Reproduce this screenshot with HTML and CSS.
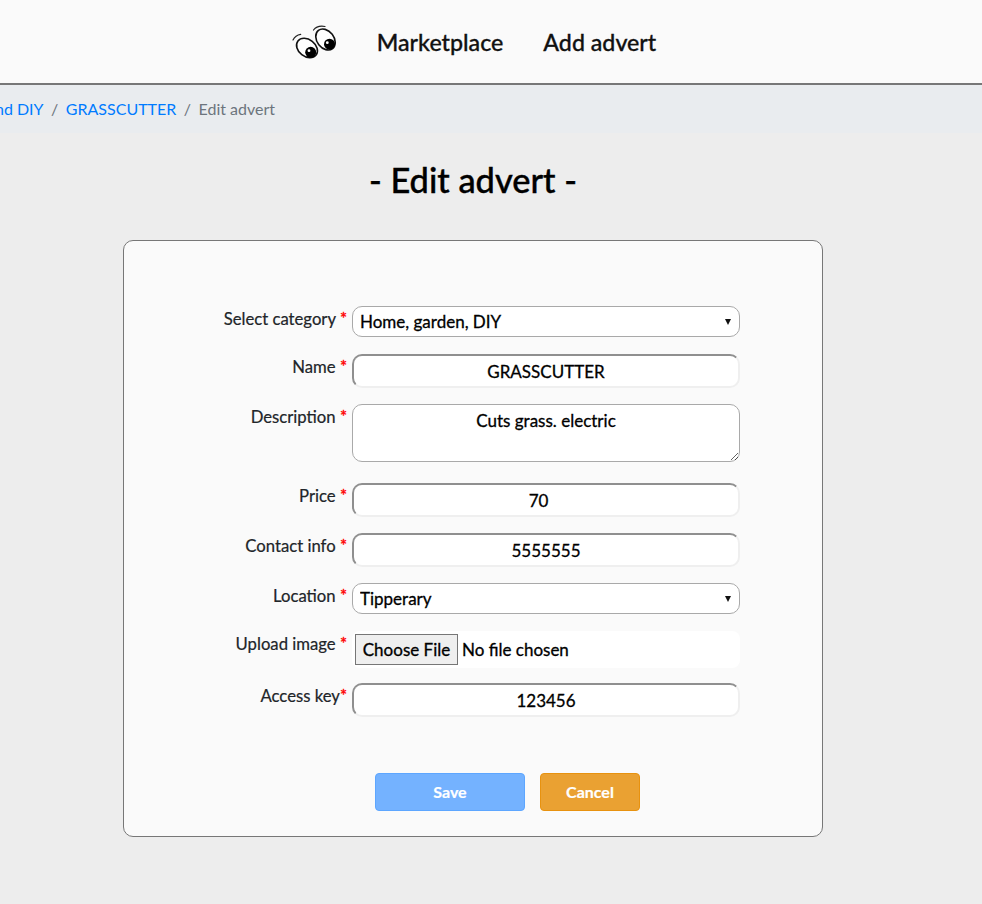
FILE: index.html
```html
<!DOCTYPE html>
<html lang="en">
<head>
<meta charset="utf-8">
<title>Edit advert</title>
<link rel="stylesheet" href="styles.css">
</head>
<body>
<header class="nav">
  <svg class="logo" width="45" height="36" viewBox="0 0 45 36" aria-label="Eyes logo">
    <g transform="translate(-292 -24)">
      <ellipse class="eye" cx="307" cy="48" rx="11.500" ry="8.500" transform="rotate(38 307 48)"/>
      <ellipse class="eye" cx="325.500" cy="39.500" rx="11.500" ry="8.500" transform="rotate(52 325.500 39.500)"/>
      <circle cx="310.700" cy="52.300" r="5.500"/>
      <circle cx="329.500" cy="44.200" r="5.500"/>
      <circle class="glint" cx="309" cy="50.700" r="1.400"/>
      <circle class="glint" cx="327.300" cy="42.700" r="1.400"/>
      <path class="brow" d="M293 40C294.500 36.800 297 34.800 300.700 34.300"/>
      <path class="brow" d="M313.500 30C316 26.800 319.500 25.500 325 26.500"/>
    </g>
  </svg>
  <a class="nav-link" href="#">Marketplace</a>
  <a class="nav-link" href="#">Add advert</a>
</header>
<nav class="crumbs">
  <a href="#">and DIY</a><span class="sep">/</span><a href="#">GRASSCUTTER</a><span class="sep">/</span><span class="current">Edit advert</span>
</nav>
<main class="content">
  <h1 class="title">- Edit advert -</h1>
  <form class="card">
    <div class="row">
      <label class="label">Select category <span class="req">*</span></label>
      <select class="field select"><option>Home, garden, DIY</option></select>
    </div>
    <div class="row">
      <label class="label">Name <span class="req">*</span></label>
      <input class="field input" type="text" value="GRASSCUTTER">
    </div>
    <div class="row row-area">
      <label class="label">Description <span class="req">*</span></label>
      <textarea class="field area">Cuts grass. electric</textarea>
    </div>
    <div class="row">
      <label class="label">Price <span class="req">*</span></label>
      <input class="field input short" type="text" value="70">
    </div>
    <div class="row">
      <label class="label">Contact info <span class="req">*</span></label>
      <input class="field input" type="text" value="5555555">
    </div>
    <div class="row">
      <label class="label">Location <span class="req">*</span></label>
      <select class="field select"><option>Tipperary</option></select>
    </div>
    <div class="row">
      <label class="label">Upload image <span class="req">*</span></label>
      <input class="field file" type="file">
    </div>
    <div class="row">
      <label class="label">Access key<span class="req">*</span></label>
      <input class="field input" type="text" value="123456">
    </div>
    <div class="actions">
      <button class="btn save" type="button">Save</button>
      <button class="btn cancel" type="button">Cancel</button>
    </div>
  </form>
</main>
</body>
</html>
```
FILE: styles.css
```css
* { box-sizing: border-box; }
html, body { margin: 0; height: 100%; }
body {
  background: #ededed;
  color: #212529;
  font-family: Lato, "Liberation Sans", sans-serif;
  font-size: 16px;
  line-height: 24px;
  overflow: hidden;
}
.nav {
  height: 85px;
  background: #fafafa;
  border-bottom: 2px solid #777;
  display: flex;
  align-items: center;
  justify-content: center;
  gap: 40px;
  padding-right: 34px;
}
.logo { flex: none; }
.eye { fill: #fff; stroke: #111; stroke-width: 1.600; }
.glint { fill: #fff; }
.brow { fill: none; stroke: #222; stroke-width: 1.200; stroke-linecap: round; }
.nav-link {
  color: #111;
  font-size: 23.200px;
  font-weight: 500;
  text-decoration: none;
  -webkit-text-stroke: 0.3px #111;
}
.crumbs {
  height: 48px;
  background: #e9ecef;
  display: flex;
  align-items: center;
  white-space: nowrap;
  overflow: hidden;
}
.crumbs a { color: #007bff; text-decoration: none; }
.crumbs a:first-child { margin-left: -13px; }
.sep { color: #6c757d; padding: 0 7.500px; }
.current { color: #6c757d; }
.content {
  padding-right: 36px;
  display: flex;
  flex-direction: column;
  align-items: center;
}
.title {
  margin: 23px 0 36px;
  font-size: 34.400px;
  line-height: 48px;
  font-weight: 500;
  color: #000;
  -webkit-text-stroke: 0.4px #000;
}
.card {
  width: 700px;
  height: 597px;
  background: #fafafa;
  border: 1px solid #777;
  border-radius: 10px;
  padding-top: 65px;
}
.row {
  display: flex;
  align-items: flex-start;
  gap: 5px;
  margin-bottom: 16px;
}
.row-area { margin-bottom: 21px; }
.label {
  flex: none;
  width: 223px;
  padding-top: 1px;
  font-size: 16.700px;
  text-align: right;
  color: #212529;
  -webkit-text-stroke: 0.2px #212529;
}
.req { color: #f00; -webkit-text-stroke: 0.4px #f00; }
.field {
  flex: none;
  width: 388px;
  font-family: Lato, "Liberation Sans", sans-serif;
  font-size: 17px;
  font-weight: 400;
  color: #000;
  background-color: #fff;
  border-radius: 10px;
  -webkit-text-stroke: 0.3px #000;
}
.select {
  height: 31px;
  border: 1px solid #a9a9a9;
  padding: 0 0 0 7px;
  margin-bottom: 1px;
  appearance: none;
  background-image: url("data:image/svg+xml,%3Csvg xmlns='http://www.w3.org/2000/svg' width='8' height='6'%3E%3Cpath d='M1 0h6L4 6z' fill='%23111'/%3E%3C/svg%3E");
  background-repeat: no-repeat;
  background-position: right 7px center;
}
.input {
  height: 34px;
  border: 2px solid;
  border-color: #8f8f8f #efefef #efefef #8f8f8f;
  text-align: center;
  padding: 1px 2px;
}
.short { padding-right: 17px; }
.area {
  height: 58px;
  border: 1px solid #a9a9a9;
  text-align: center;
  padding: 4px 2px 2px;
  line-height: 24px;
  display: block;
}
.file {
  height: 37px;
  padding: 3px;
  border-radius: 8px;
  margin-bottom: -1px;
}
.file::file-selector-button {
  height: 31px;
  width: 103px;
  margin-right: 4px;
  padding: 0;
  background: #efefef;
  border: 1px solid #767676;
  border-radius: 0;
  font: inherit;
  color: #000;
}
.actions {
  display: flex;
  gap: 15px;
  margin-top: 56px;
  padding-left: 251px;
}
.btn {
  height: 38px;
  border-radius: 4px;
  color: #fff;
  font-family: Lato, "Liberation Sans", sans-serif;
  font-size: 16px;
  font-weight: 700;
  padding: 0 0 2px;
  -webkit-text-stroke: 0.2px #fff;
}
.save { width: 150px; background: #74b2ff; border: 1px solid #5da6ff; }
.cancel { width: 100px; background: #eaa132; border: 1px solid #e8920f; }
```
